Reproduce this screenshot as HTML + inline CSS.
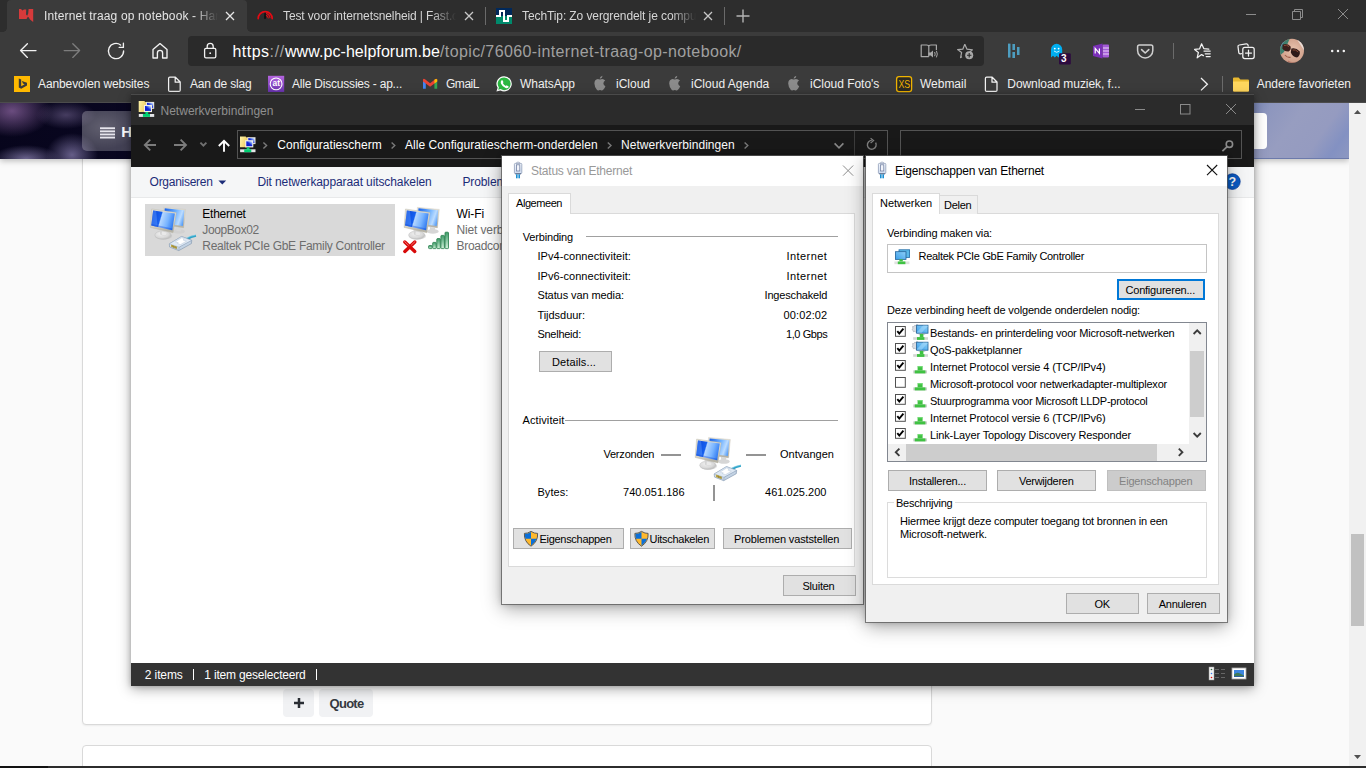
<!DOCTYPE html>
<html lang="nl"><head><meta charset="utf-8"><title>Internet traag op notebook</title>
<style>
html,body{margin:0;padding:0;}
body{width:1366px;height:768px;overflow:hidden;position:relative;background:#fafafa;font-family:"Liberation Sans",sans-serif;}
.layer{position:absolute;left:0;top:0;width:1366px;height:768px;overflow:hidden;}
.a{position:absolute;box-sizing:border-box;}
span.t{position:absolute;white-space:nowrap;font-family:"Liberation Sans",sans-serif;}
span.fade{overflow:hidden;-webkit-mask-image:linear-gradient(90deg,#000 0,#000 86%,transparent 100%);mask-image:linear-gradient(90deg,#000 0,#000 86%,transparent 100%);}
svg{position:absolute;overflow:visible;}
/* chrome */
#tabstrip{left:0;top:0;width:1366px;height:32px;background:#2d2d2d;}
#toolbar{left:0;top:32px;width:1366px;height:71px;background:#3b3b3b;border-bottom:1px solid #4c4c4c;}
#tab1{left:7px;top:0;width:240px;height:32px;background:#3b3b3b;border-radius:4px 4px 0 0;}
#tab1:before,#tab1:after{content:"";position:absolute;bottom:0;width:4px;height:4px;}
#tab1:before{left:-4px;background:radial-gradient(circle at 0 0,transparent 3.6px,#3b3b3b 4px);}
#tab1:after{right:-4px;background:radial-gradient(circle at 100% 0,transparent 3.6px,#3b3b3b 4px);}
#omni{left:188px;top:36px;width:796px;height:30px;background:#2a2a2a;border-radius:4px;}
.tsep{width:1px;height:18px;top:7px;background:#6a6a6a;}
/* page */
#hdr{left:0;top:103px;width:1349px;height:56px;background:
 radial-gradient(ellipse 40px 26px at 12px 8px,rgba(140,100,160,.75),transparent),
 radial-gradient(ellipse 30px 14px at 66px 12px,rgba(120,105,150,.55),transparent),
 radial-gradient(ellipse 34px 14px at 26px 56px,rgba(150,140,190,.7),transparent),
 radial-gradient(ellipse 26px 22px at 72px 52px,rgba(140,130,180,.7),transparent),
 linear-gradient(100deg,#07051c 0,#0a0722 14%,#5a5a8a 60%,#8f94bd 92%,#9a9dc0 100%);box-shadow:0 2px 6px rgba(0,0,0,.25);}
#hdrr{left:1240px;top:103px;width:109px;height:56px;background:linear-gradient(125deg,#7080b4 0,#8d96be 22%,#979dc0 45%,#959bc0 70%,#8391c2 86%,#8d98c1 100%);border-bottom:1px solid #6c7aab;}
#hbtn{left:82px;top:111px;width:110px;height:40px;border-radius:5px;background:radial-gradient(ellipse 34px 22px at 22px 16px,rgba(255,255,255,.16),transparent),rgba(255,255,255,.24);}
#hsearch{left:1000px;top:113px;width:267px;height:36px;border-radius:4px;background:#fff;}
#card1{left:82px;top:150px;width:850px;height:575px;background:#fff;border:1px solid #d9d9d9;border-radius:4px;box-shadow:0 1px 2px rgba(0,0,0,.06);}
#card2{left:82px;top:745px;width:850px;height:60px;background:#fff;border:1px solid #d9d9d9;border-radius:4px;}
.pbtn{background:#f1f2f4;border-radius:4px;}
#vsb{left:1349px;top:102px;width:17px;height:664px;background:#f1f1f1;}
#vthumb{left:1351px;top:534px;width:13px;height:92px;background:#c1c1c1;}
#taskbar{left:0;top:766px;width:1366px;height:2px;background:linear-gradient(90deg,#121212 0,#121212 48px,#2c2c2c 48px,#2c2c2c 100%);}
/* explorer */
#exp{left:131px;top:95px;width:1123px;height:591px;background:#fff;box-shadow:0 -1px 0 0 #4a4a4a,0 3px 12px rgba(0,0,0,.34),0 0 5px rgba(0,0,0,.22);}
#exptitle{left:131px;top:95px;width:1123px;height:30px;background:#2b2b2b;}
#expnav{left:131px;top:125px;width:1123px;height:42px;background:#191919;}
#expcmd{left:131px;top:167px;width:1123px;height:31px;background:#f5f6f7;border-bottom:1px solid #e8e9ea;}
#expstat{left:131px;top:663px;width:1123px;height:23px;background:#333;}
.nbox{border:1px solid #535353;background:#191919;}
#sel{left:145px;top:204px;width:250px;height:52px;background:#d9d9d9;}
/* dialogs */
.dlg{background:#f0f0f0;box-shadow:0 0 0 1px rgba(90,90,90,.75),0 4px 18px rgba(0,0,0,.38),0 0 6px rgba(0,0,0,.22);}
.dtitle{background:#fff;}
.panel{background:#fff;border:1px solid #dadada;}
.tab{background:#fff;border:1px solid #dadada;border-bottom:none;}
.tabi{background:#f0f0f0;border:1px solid #dadada;border-bottom:none;}
.btn{background:#e1e1e1;border:1px solid #adadad;}
.btnd{background:#cccccc;border:1px solid #bfbfbf;}
.hr{height:1px;background:#a0a0a0;}
.cb{width:13px;height:13px;border:1px solid #333;background:#fff;}

</style></head><body>
<!-- ================= PAGE ================= -->
<div class="layer" id="L-page">
<div class="a" id="card1"></div>
<div class="a" id="card2"></div>
<div class="a pbtn" style="left:283px;top:689px;width:31px;height:27.5px;"></div>
<div class="a pbtn" style="left:319px;top:689px;width:54px;height:27.5px;"></div>
<div class="a" id="hdr"></div>
<div class="a" id="hdrr"></div>
<div class="a" id="hbtn"></div>
<div class="a" id="hsearch"></div>
<svg style="left:100px;top:126.5px" width="15" height="12" viewBox="0 0 15 12"><g fill="#e6e4ec"><rect y="0.3" width="15" height="1.9"/><rect y="3.4" width="15" height="1.9"/><rect y="6.5" width="15" height="1.9"/><rect y="9.6" width="15" height="1.9"/></g></svg>
<div class="a" id="vsb"></div>
<div class="a" id="vthumb"></div>
<svg style="left:1354px;top:110px" width="7" height="4" viewBox="0 0 7 4"><path d="M0 4 L3.5 0 L7 4Z" fill="#505050"/></svg>
<svg style="left:1354px;top:755px" width="7" height="4" viewBox="0 0 7 4"><path d="M0 0 L3.5 4 L7 0Z" fill="#505050"/></svg>
<svg style="left:294px;top:698px" width="10" height="10" viewBox="0 0 10 10"><path d="M5 0 V10 M0 5 H10" stroke="#2a2e34" stroke-width="2.5" fill="none"/></svg>
<span class="t" id="t19" style="left:121.3px;top:121.9px;font-size:15px;line-height:19px;color:#fff;font-weight:700;">H</span>
<span class="t" id="t20" style="left:329.5px;top:695px;font-size:13px;line-height:17px;color:#353a40;font-weight:700;letter-spacing:-0.713px;">Quote</span>
<div class="a" id="taskbar"></div>
</div>
<!-- ================= CHROME ================= -->
<div class="layer" id="L-chrome" style="height:103px">
<div class="a" id="tabstrip"></div>
<div class="a" id="toolbar"></div>
<div class="a" id="tab1"></div>
<div class="a" id="omni"></div>
<div class="a tsep" style="left:485px"></div>
<div class="a tsep" style="left:724px"></div>
<!-- tab favicons -->
<svg style="left:0;top:0" width="1366" height="102" viewBox="0 0 1366 102">
<defs>
<linearGradient id="gat" x1="0" y1="0" x2="0" y2="1"><stop offset="0" stop-color="#b565e0"/><stop offset="1" stop-color="#6a34b0"/></linearGradient>
<clipPath id="avc"><circle cx="1292" cy="50.7" r="12"/></clipPath>
<radialGradient id="gface" cx="0.55" cy="0.45" r="0.6"><stop offset="0" stop-color="#e9c3ae"/><stop offset="1" stop-color="#c99782"/></radialGradient>
</defs>
<path d="M19 9 L21 9 L22.4 10.6 L24 9.6 L26.2 9.6 L26 14.6 L27.2 15.8 L28.2 13.5 L28.6 9 L33.2 9 L33.2 22 L30 19.4 L28.6 17.2 L27.8 16.8 L26.5 19 L19 19 Z" fill="#d63a3b"/>
<g fill="none" stroke="#e30a13" stroke-linecap="round">
<path d="M258.2 18.6 A7 7 0 0 1 272.2 18.6" stroke-width="1.7"/>
<path d="M266.5 13.4 A5.2 5.2 0 0 1 270 17.8" stroke-width="1.1"/>
<path d="M266.3 15.6 A3.2 3.2 0 0 1 268.2 18" stroke-width="1.1"/>
</g>
<path d="M264.5 12.8 L265.6 12.8 L265.9 18.8 L264.2 18.8Z" fill="#0a0a0a"/>
<rect x="496" y="8" width="16" height="8" fill="#00285a"/><rect x="496" y="16" width="16" height="8" fill="#008a6c"/>
<path d="M496 15 H499 V10 H505 V20 H507 V15 H512 V17 H509 V22 H503 V12 H501 V17 H496Z" fill="#fff"/>
<!-- tab close / plus -->
<g stroke="#e6e6e6" stroke-width="1.3" fill="none" stroke-linecap="butt">
<path d="M226 12 L234 20 M234 12 L226 20"/>
</g>
<g stroke="#c8c8c8" stroke-width="1.3" fill="none">
<path d="M465 12 L473 20 M473 12 L465 20"/>
<path d="M704 12 L712 20 M712 12 L704 20"/>
<path d="M736.5 16 H749.5 M743 9.5 V22.5" stroke="#b4b4b4" stroke-width="1.4"/>
</g>
<!-- window controls -->
<g stroke="#8c8c8c" stroke-width="1" fill="none">
<path d="M1246 14.5 H1256"/>
<path d="M1292.5 11.5 H1300.5 V19.5 H1292.5Z M1294.5 11.5 V9.5 H1302.5 V17.5 H1300.5"/>
<path d="M1338 9 L1348 19 M1348 9 L1338 19"/>
</g>
<!-- nav buttons -->
<g stroke="#f2f2f2" stroke-width="1.35" fill="none" stroke-linecap="round" stroke-linejoin="round">
<path d="M36 50.6 H20.6 M27.4 43.8 L20.6 50.6 L27.4 57.4"/>
<path d="M64.2 50.6 H79.6 M72.8 43.8 L79.6 50.6 L72.8 57.4" stroke="#7d7d7d"/>
<path d="M123.6 51 A7.6 7.6 0 1 1 120.6 45 M123.4 43.2 V47.4 H119.2"/>
<path d="M153 58 V49.6 L160 43.6 L167 49.6 V58 H162.6 V53 A2.6 2.6 0 0 0 157.4 53 V58 Z"/>
</g>
<!-- lock -->
<g stroke="#f2f2f2" stroke-width="1.3" fill="none" stroke-linejoin="round">
<rect x="204.6" y="48.4" width="11.2" height="9.4" rx="1.4"/>
<path d="M207.2 48.4 V46.4 A3 3 0 0 1 213.2 46.4 V48.4"/>
<circle cx="210.2" cy="53.2" r="0.9" fill="#f2f2f2" stroke="none"/>
</g>
<!-- read aloud + add favourite -->
<g stroke="#a9a9a9" stroke-width="1.2" fill="none" stroke-linejoin="round">
<path d="M928.8 45.4 V56.6 M928.8 56.6 H921.2 V45 H926.6 Q928.8 45 928.8 46.6 Q928.8 45 931 45 H936.4 V50"/>
<path d="M928.4 52.6 H930.6 L933 50.6 V57.6 L930.6 55.6 H928.4Z" fill="#a9a9a9" stroke="none"/>
<path d="M934.6 52 Q935.8 54.1 934.6 56.2 M936.4 50.8 Q938.2 54.1 936.4 57.4" stroke-width="1"/>
<path d="M964.8 44.2 L967 49.2 L972.4 49.8 L969.6 52.4 M962 56.8 L960.6 57.6 L961.6 52.6 L957.6 49.6 L962.8 49.2 L964.8 44.2"/>
</g>
<circle cx="969.2" cy="55.2" r="4" fill="#a9a9a9"/>
<path d="M969.2 53 V57.4 M967 55.2 H971.4" stroke="#2a2a2a" stroke-width="1.1"/>
<!-- extension icons -->
<g fill="#4d9dc0">
<rect x="1008" y="43.6" width="2.5" height="14"/><rect x="1012.4" y="44" width="2.6" height="6"/><rect x="1012.4" y="52" width="2.6" height="6"/><rect x="1017" y="47" width="2.5" height="8"/>
</g>
<path d="M1051 57.4 V49.4 A5.6 5.6 0 0 1 1062.2 49.4 V57.4 L1060.4 55.8 L1058.6 57.6 L1056.6 55.8 L1054.8 57.6 L1053 55.8 Z" fill="#00aef0"/>
<circle cx="1054.8" cy="48.6" r="0.9" fill="#fff"/><circle cx="1058.6" cy="48.6" r="0.9" fill="#fff"/>
<path d="M1054 51 Q1056.7 53.6 1059.4 51" stroke="#fff" stroke-width="0.8" fill="none"/>
<rect x="1059" y="53.2" width="11.8" height="11.2" rx="1.2" fill="#2d0b3f"/>
<path d="M1093 46 L1102.6 43.6 V58.4 L1093 56 Z" fill="#7b30b8"/>
<rect x="1102.6" y="44.6" width="6.4" height="12.8" rx="0.8" fill="#a45bd8"/>
<path d="M1103 48 H1109 M1103 51 H1109 M1103 54 H1109" stroke="#e9d6f7" stroke-width="1.1"/>
<path d="M1095.2 53.4 V48.4 L1099.4 53.4 V48.4" stroke="#fff" stroke-width="1.2" fill="none"/>
<path d="M1137.6 46.8 Q1137.6 45 1139.4 45 H1151 Q1152.8 45 1152.8 46.8 V50.4 A7.6 7.6 0 0 1 1137.6 50.4 Z" fill="none" stroke="#cfcfcf" stroke-width="1.5"/>
<path d="M1141.6 49.6 L1145.2 53 L1148.8 49.6" fill="none" stroke="#cfcfcf" stroke-width="1.6" stroke-linecap="round" stroke-linejoin="round"/>
<rect x="1173" y="43" width="1" height="16" fill="#6b6b6b"/>
<!-- favourites / collections / avatar / menu -->
<g stroke="#f2f2f2" stroke-width="1.25" fill="none" stroke-linejoin="round" stroke-linecap="round">
<path d="M1201.6 43.8 L1203.8 48.6 L1208.8 49.2 M1203.4 55.6 L1201.6 54.6 L1197.2 57.8 L1198.4 52.4 L1194.6 49.4 L1199.6 48.8 L1201.6 43.8"/>
<path d="M1204 51 H1210.2 M1205.2 53.8 H1210.2 M1206.2 56.6 H1210.2"/>
<path d="M1241.4 53.6 L1240.4 53.8 Q1239 54 1238.8 52.6 L1238 46.6 Q1237.8 45.2 1239.2 45 L1246.2 43.8 Q1247.6 43.6 1248 45 L1248.2 46"/>
<rect x="1242.8" y="47.4" width="11.4" height="11.2" rx="2"/>
<path d="M1248.5 50 V56 M1245.5 53 H1251.5"/>
</g>
<g clip-path="url(#avc)">
<rect x="1279" y="38" width="26" height="26" fill="url(#gface)"/>
<path d="M1279 38 H1290 L1284 52 L1279 56Z" fill="#3e7f6e"/>
<path d="M1279 38 H1286 L1281 47 L1279 48Z" fill="#5d8fc0"/>
<path d="M1296 38 H1305 V52 Q1300 44 1296 38Z" fill="#e8dcd6"/>
<path d="M1282.6 44.6 Q1287 42.6 1290.6 46.4 Q1291.4 49.8 1288.6 51.4 Q1284.2 51.6 1282.4 48.2Z" fill="#3a1f1c"/>
<path d="M1291.4 48.6 Q1295.6 47 1299.8 51.6 Q1300.4 55.8 1297 57.6 Q1292.6 57 1290.8 52.6Z" fill="#2f1a19"/>
<path d="M1284 45.6 Q1286.6 44.2 1289 46.6" stroke="#8a4a35" stroke-width="1" fill="none"/>
<path d="M1292.6 50 Q1295.6 49 1298.2 52" stroke="#8a4a35" stroke-width="1" fill="none"/>
<path d="M1285 55 Q1287.4 58.2 1290.6 57.2" stroke="#a0604c" stroke-width="1.2" fill="none"/>
<path d="M1288 60.5 Q1292 63.5 1297 61.5 L1296 64 H1287Z" fill="#b87a68"/>
</g>
<g fill="#f2f2f2"><circle cx="1332.2" cy="51" r="1.25"/><circle cx="1338" cy="51" r="1.25"/><circle cx="1343.8" cy="51" r="1.25"/></g>
<!-- bookmarks bar icons -->
<rect x="14" y="76" width="16" height="16" fill="#ffb900"/>
<path d="M18.8 78.6 L21.2 79.5 V86.2 L24.6 84.3 L22.9 83.5 L21.9 81 L27 82.8 V85.4 L21.2 88.8 L18.8 87.4 Z" fill="#3a3a3a"/>
<g stroke="#f2f2f2" stroke-width="1.25" fill="none" stroke-linejoin="round">
<path d="M168.6 78.4 Q168.6 77.2 169.8 77.2 H175.4 L180.2 82 V90.2 Q180.2 91.4 179 91.4 H169.8 Q168.6 91.4 168.6 90.2Z M175.2 77.4 V82.2 H180"/>
<path d="M985.4 78.4 Q985.4 77.2 986.6 77.2 H992.2 L997 82 V90.2 Q997 91.4 995.8 91.4 H986.6 Q985.4 91.4 985.4 90.2Z M992 77.4 V82.2 H996.8"/>
</g>
<rect x="268" y="75.8" width="16.2" height="16.2" fill="url(#gat)"/>
<circle cx="276.1" cy="83.9" r="5.9" fill="none" stroke="#fff" stroke-width="1.1"/>
<!-- gmail -->
<path d="M423 79.4 V88.8 H425.8 V82.6 Z" fill="#4285f4"/>
<path d="M437.2 79.4 V88.8 H434.4 V82.6 Z" fill="#34a853"/>
<path d="M423 79.4 Q423.6 78.4 425 79.2 L430.1 83.2 L435.2 79.2 Q436.6 78.4 437.2 79.4 V81.4 L430.1 86.8 L423 81.4Z" fill="#ea4335"/>
<path d="M434.4 79.8 L435.2 79.2 Q436.6 78.4 437.2 79.6 V81.4 L434.4 83.6Z" fill="#fbbc04"/>
<!-- whatsapp -->
<path d="M504.2 76.2 A7.6 7.6 0 1 1 500.4 90.4 L496.4 91.6 L497.6 87.8 A7.6 7.6 0 0 1 504.2 76.2Z" fill="#fff"/>
<path d="M504.2 77.4 A6.4 6.4 0 1 1 500.6 89.1 L498.2 89.8 L498.9 87.5 A6.4 6.4 0 0 1 504.2 77.4Z" fill="#2bb741"/>
<path d="M501.6 80.2 Q502.2 79.8 502.6 80.4 L503.4 82 Q503.5 82.4 502.8 83.1 Q503.8 85.1 505.8 86 Q506.5 85.2 506.9 85.4 L508.4 86.2 Q508.9 86.6 508.4 87.4 Q507.4 88.6 505.6 88 Q502.2 86.8 500.9 83.6 Q500.2 81.4 501.6 80.2Z" fill="#fff"/>
<!-- apple x3 -->
<g fill="#8b8b8b" id="apl">
<path d="M603.4 83.6 Q603.4 81.6 605.2 80.6 Q604 79 602.2 79 Q601.2 79 600 79.6 Q598.6 79 597.8 79 Q594.6 79.4 594.4 83.4 Q594.6 87.4 597 90 Q598 90.8 599 90.2 Q600 89.8 601 90.2 Q602.2 90.8 603.2 89.8 Q604.6 88.4 605.4 86.2 Q603.4 85.4 603.4 83.6Z M599.8 78.8 Q599.6 76.8 602.4 75.8 Q602.6 78.2 599.8 78.8Z"/>
</g>
<use href="#apl" x="74.8"/><use href="#apl" x="193.8"/>
<!-- XS -->
<rect x="896.6" y="76.6" width="15" height="15" rx="2.4" fill="#2c2a24" stroke="#f0b400" stroke-width="1.3"/>
<text x="898.4" y="88.2" font-family="Liberation Sans, sans-serif" font-size="11.6" fill="#f0b400" textLength="11.8" lengthAdjust="spacingAndGlyphs">XS</text>
<text x="276.2" y="86.4" font-family="Liberation Sans, sans-serif" font-size="8.4" font-weight="700" fill="#fff" text-anchor="middle">at</text>
<!-- overflow chevron, separator, folder -->
<path d="M1201 78 L1207.4 84.2 L1201 90.4" stroke="#f2f2f2" stroke-width="1.3" fill="none"/>
<rect x="1222" y="76" width="1" height="16" fill="#6b6b6b"/>
<path d="M1233 78.4 Q1233 77.4 1234 77.4 H1238.6 L1240.4 79.4 H1248 Q1249 79.4 1249 80.4 V90.4 Q1249 91.4 1248 91.4 H1234 Q1233 91.4 1233 90.4Z" fill="#e8b830"/>
<path d="M1233 81.6 H1249 V90.4 Q1249 91.4 1248 91.4 H1234 Q1233 91.4 1233 90.4Z" fill="#ffd75e"/>
</svg>

<span class="t fade" id="t0" style="left:44px;top:7.7px;font-size:12px;line-height:16px;color:#e4e4e4;letter-spacing:0.147px;width:174px;">Internet traag op notebook - Har</span>
<span class="t fade" id="t1" style="left:283px;top:7.7px;font-size:12px;line-height:16px;color:#d6d6d6;letter-spacing:-0.120px;width:173px;">Test voor internetsnelheid | Fast.c</span>
<span class="t fade" id="t2" style="left:522px;top:7.7px;font-size:12px;line-height:16px;color:#d6d6d6;letter-spacing:-0.098px;width:174px;">TechTip: Zo vergrendelt je compu</span>
<span class="t" id="t3" style="left:232.5px;top:42px;font-size:16px;line-height:20px;color:#ffffff;letter-spacing:0.463px;">https</span>
<span class="t" id="t4" style="left:269.5px;top:42px;font-size:16px;line-height:20px;color:#a0a0a0;letter-spacing:0.719px;">://</span>
<span class="t" id="t5" style="left:285px;top:42px;font-size:16px;line-height:20px;color:#ffffff;letter-spacing:0.061px;">www.pc-helpforum.be</span>
<span class="t" id="t6" style="left:440px;top:42px;font-size:16px;line-height:20px;color:#a0a0a0;letter-spacing:0.382px;">/topic/76060-internet-traag-op-notebook/</span>
<span class="t" id="t7" style="left:38px;top:76px;font-size:12px;line-height:16px;color:#f0f0f0;letter-spacing:-0.112px;">Aanbevolen websites</span>
<span class="t" id="t8" style="left:190px;top:76px;font-size:12px;line-height:16px;color:#f0f0f0;letter-spacing:-0.172px;">Aan de slag</span>
<span class="t" id="t9" style="left:292px;top:76px;font-size:12px;line-height:16px;color:#f0f0f0;letter-spacing:-0.204px;">Alle Discussies - ap...</span>
<span class="t" id="t10" style="left:446px;top:76px;font-size:12px;line-height:16px;color:#f0f0f0;letter-spacing:-0.469px;">GmaiL</span>
<span class="t" id="t11" style="left:520px;top:76px;font-size:12px;line-height:16px;color:#f0f0f0;letter-spacing:-0.045px;">WhatsApp</span>
<span class="t" id="t12" style="left:616px;top:76px;font-size:12px;line-height:16px;color:#f0f0f0;letter-spacing:-0.005px;">iCloud</span>
<span class="t" id="t13" style="left:691px;top:76px;font-size:12px;line-height:16px;color:#f0f0f0;letter-spacing:0.017px;">iCloud Agenda</span>
<span class="t" id="t14" style="left:810px;top:76px;font-size:12px;line-height:16px;color:#f0f0f0;letter-spacing:-0.027px;">iCloud Foto's</span>
<span class="t" id="t15" style="left:920px;top:76px;font-size:12px;line-height:16px;color:#f0f0f0;letter-spacing:-0.024px;">Webmail</span>
<span class="t" id="t16" style="left:1007.3px;top:76px;font-size:12px;line-height:16px;color:#f0f0f0;letter-spacing:-0.072px;">Download muziek, f...</span>
<span class="t" id="t17" style="left:1256.7px;top:76px;font-size:12px;line-height:16px;color:#f0f0f0;letter-spacing:-0.026px;">Andere favorieten</span>
<span class="t" id="t18" style="left:1061px;top:51.5px;font-size:10px;line-height:14px;color:#fff;font-weight:700;">3</span>
</div>
<!-- ================= EXPLORER ================= -->
<div class="layer" id="L-exp">
<div class="a" id="exp"></div>
<div class="a" id="exptitle"></div>
<div class="a" id="expnav"></div>
<div class="a" id="expcmd"></div>
<div class="a" id="expstat"></div>
<div class="a nbox" style="left:237px;top:130px;width:651px;height:29px;"></div>
<div class="a nbox" style="left:900px;top:130px;width:342px;height:29px;"></div>
<div class="a" style="left:854px;top:131px;width:1px;height:27px;background:#3c3c3c;"></div>
<div class="a" id="sel"></div>
<svg style="left:0;top:0" width="1366" height="768" viewBox="0 0 1366 768">
<defs>
<linearGradient id="gfold" x1="0" y1="0" x2="1" y2="0.3"><stop offset="0" stop-color="#fff4a8"/><stop offset="0.6" stop-color="#f3d878"/><stop offset="1" stop-color="#e3b850"/></linearGradient>
<linearGradient id="gscr16" x1="0" y1="1" x2="1" y2="0"><stop offset="0" stop-color="#0a10c8"/><stop offset="0.5" stop-color="#1428d8"/><stop offset="0.75" stop-color="#7a9cf4"/><stop offset="1" stop-color="#e8f0ff"/></linearGradient>
<g id="nf16">
<path d="M0 0.4 H5.6 L6.6 1.4 H9.6 V11.3 H0Z" fill="url(#gfold)"/>
<rect x="7.3" y="1.2" width="8.2" height="6.9" fill="#e9e8e0"/><rect x="8.3" y="2.1" width="6.2" height="5" fill="url(#gscr16)"/>
<rect x="5.2" y="4.2" width="8.1" height="7.2" fill="#f1f0e8"/><rect x="6.3" y="5.3" width="6" height="4.9" fill="url(#gscr16)"/>
<rect x="6.7" y="11.3" width="2.8" height="2.2" fill="#00cf72"/>
<rect x="0.1" y="13.3" width="15.4" height="2.9" fill="#e4e6e8"/><rect x="4.2" y="13.3" width="7.1" height="2.9" fill="#00cf72"/>
</g>
<!-- big monitor pair -->
<linearGradient id="gmf" x1="0" y1="0.35" x2="1" y2="0.6"><stop offset="0" stop-color="#0a46da"/><stop offset="0.36" stop-color="#1760ee"/><stop offset="0.41" stop-color="#b4d6ff"/><stop offset="0.7" stop-color="#78b4ff"/><stop offset="1" stop-color="#2874f0"/></linearGradient>
<linearGradient id="gmb" x1="0" y1="0.3" x2="1" y2="0.6"><stop offset="0" stop-color="#1c66ec"/><stop offset="0.5" stop-color="#6db0ff"/><stop offset="0.8" stop-color="#bcdcff"/><stop offset="1" stop-color="#5aa0f8"/></linearGradient>
<linearGradient id="gfr" x1="0" y1="0" x2="0.3" y2="1"><stop offset="0" stop-color="#e6e3d8"/><stop offset="0.7" stop-color="#d6d3c7"/><stop offset="1" stop-color="#b5b2a6"/></linearGradient>
<radialGradient id="gst" cx="0.4" cy="0.35" r="0.75"><stop offset="0" stop-color="#f0f0f0"/><stop offset="0.6" stop-color="#d9d9d9"/><stop offset="1" stop-color="#b4b4b4"/></radialGradient>
<g id="mon2">
<ellipse cx="34" cy="29.4" rx="5.8" ry="2.3" fill="#cfcfcf" opacity="0.85"/>
<path d="M31 25 L36.4 26 L36 29.4 L31.4 29Z" fill="#d6d6d6"/>
<path d="M18.6 5.3 L40.5 7.4 L38.7 25.9 L17.4 22.6 Z" fill="url(#gfr)" stroke="#c4c0b2" stroke-width="0.3"/>
<path d="M19.7 6.3 L39.4 8.2 L37.9 24 L18.6 21.4 Z" fill="url(#gmb)"/>
<ellipse cx="18.6" cy="34" rx="8.6" ry="3.6" fill="#b9b9b9" opacity="0.45"/>
<ellipse cx="17.9" cy="33.1" rx="8.1" ry="4.2" fill="url(#gst)" stroke="#bdbdbd" stroke-width="0.45"/>
<path d="M14.6 26.6 L22.8 28.6 L21.6 33 Q18 34.6 15.2 32.6Z" fill="#d4d4d4"/>
<path d="M17 29.4 L21.8 30.6 L21.4 32.8 Q18.6 33.8 16.6 32.6Z" fill="#e9e9e9"/>
<path d="M6.7 7 L31.3 10.6 L28.1 30.8 L5.3 25.4 Z" fill="url(#gfr)" stroke="#b7b3a4" stroke-width="0.4"/>
<path d="M8.1 8.4 L29.9 11.5 L27.2 28.2 L6.3 23.5 Z" fill="url(#gmf)"/>
<path d="M8.1 8.4 L11.2 8.9 L12.6 24.9 L6.3 23.5Z" fill="#5a9cff" opacity="0.45"/>
<path d="M6.3 23.5 L27.2 28.2 L27.5 26.6 L6.5 22Z" fill="#0a3fd0" opacity="0.35"/>
</g>
<linearGradient id="gplug" x1="0" y1="0" x2="1" y2="1"><stop offset="0" stop-color="#f2f7fc"/><stop offset="1" stop-color="#a9bdd2"/></linearGradient>
<g id="rj">
<path d="M40.6 36.4 Q45.6 33.6 50.8 32.7 L51.2 34.7 Q46.6 35.6 42.4 38.2Z" fill="#2ea3c8"/>
<path d="M41 36.2 Q45.8 33.8 50.8 33" stroke="#8fd6ec" stroke-width="0.6" fill="none"/>
<path d="M24.3 41.9 L36.6 34.5 L46.8 38.4 L46.4 41.6 L33.8 48.6 L24.6 45 Z" fill="url(#gplug)" stroke="#7e93ad" stroke-width="0.6" stroke-linejoin="round"/>
<path d="M24.3 41.9 L36.6 34.5 L46.8 38.4 L34.2 45.2Z" fill="#dfe9f4" stroke="#8fa4bd" stroke-width="0.45"/>
<path d="M34.2 45.2 L33.8 48.6 M34.2 45.2 L46.8 38.4" stroke="#8fa4bd" stroke-width="0.45" fill="none"/>
<path d="M30.4 39.8 L36.8 35.8 L39.4 36.8 L38 38 L41.4 39.2 L35.4 42.6 L32.4 41.4 L33.4 40.8Z" fill="#fff" stroke="#a9bace" stroke-width="0.35"/>
<path d="M36 44.8 L45.4 39.7 L45.2 41.4 L36 46.6Z" fill="#c3d3e4" opacity="0.9"/>
<path d="M26 42.5 L31.8 44.7 L31.8 47 L26 44.8Z" fill="#cdb74e"/>
<path d="M27.2 43 V45.3 M28.6 43.5 V45.8 M30 44 V46.3 M31.2 44.5 V46.8" stroke="#6f6224" stroke-width="0.55"/>
</g>
</defs>
<!-- title icon & address icon -->
<use href="#nf16" transform="translate(138.7,100.7)"/>
<use href="#nf16" transform="translate(240,136)"/>
<!-- window controls -->
<g stroke="#8a8a8a" stroke-width="1" fill="none">
<path d="M1135 109.5 H1145"/><rect x="1180.5" y="104.5" width="9.5" height="9.5"/><path d="M1226 104 L1236 114 M1236 104 L1226 114"/>
</g>
<!-- nav arrows -->
<g stroke="#7c7c7c" stroke-width="1.9" fill="none">
<path d="M156 145 H145 M150.2 139.6 L144.8 145 L150.2 150.4"/>
<path d="M174 145 H185 M180.6 139.6 L186 145 L180.6 150.4"/>
<path d="M200.4 142.6 L203.4 145.6 L206.4 142.6" stroke="#707070" stroke-width="1.9"/>
<path d="M224 151.8 V141 M218.8 146 L224 140.8 L229.2 146" stroke="#ffffff"/>
</g>
<g stroke="#7a7a7a" stroke-width="1.4" fill="none">
<path d="M263.4 142.4 L266.6 145.5 L263.4 148.6"/>
<path d="M391.6 142.4 L394.8 145.5 L391.6 148.6"/>
<path d="M607.8 142.4 L611 145.5 L607.8 148.6"/>
<path d="M744.6 142.4 L747.8 145.5 L744.6 148.6"/>
<path d="M834.6 143.4 L839 147.8 L843.4 143.4" stroke="#8a8a8a" stroke-width="1.6"/>
<path d="M875.6 142.6 A4.4 4.4 0 1 1 871.8 140.4" stroke="#7e7e7e" stroke-width="1.4"/>
<path d="M870.6 138.2 L873.6 140.6 L870.6 143" stroke="#7e7e7e" stroke-width="1.2"/>
</g>
<circle cx="1229.4" cy="144.2" r="3.2" fill="none" stroke="#8c8c8c" stroke-width="1.6"/>
<path d="M1227.2 146.6 L1222.4 151.2" stroke="#8c8c8c" stroke-width="1.8"/>
<!-- command bar -->
<path d="M218.4 180.4 H226.2 L222.3 184.6Z" fill="#1c2c78"/>
<circle cx="1232.4" cy="181.6" r="7.8" fill="#0a5bc4" stroke="#0a3f9a" stroke-width="0.8"/>
<text x="1232.4" y="186.2" font-family="Liberation Sans, sans-serif" font-size="12.5" font-weight="700" fill="#fff" text-anchor="middle">?</text>
<!-- big icons -->
<use href="#mon2" transform="translate(145,202)"/>
<use href="#rj" transform="translate(145,202)"/>
<use href="#mon2" transform="translate(398.8,202)"/>
<g stroke="#d80a0a" stroke-width="3.4" stroke-linecap="round"><path d="M404.8 242 L414.8 251.4 M414.8 242 L404.8 251.4"/></g>
<g stroke="#ff9a9a" stroke-width="1" stroke-linecap="round" opacity="0.7"><path d="M404.6 241.6 L408.4 245.2 M415 241.6 L411.4 245"/></g>
<linearGradient id="gbar" x1="0" y1="0" x2="0" y2="1"><stop offset="0" stop-color="#3f9d69"/><stop offset="1" stop-color="#d3f2dc"/></linearGradient>
<g fill="url(#gbar)" stroke="#1f7a46" stroke-width="0.8" stroke-linejoin="round">
<rect x="428.6" y="245.6" width="3.5" height="3" rx="0.7"/><rect x="432.7" y="242.4" width="3.5" height="6.2" rx="0.7"/><rect x="436.8" y="238.6" width="3.5" height="10" rx="0.7"/><rect x="440.9" y="235.4" width="3.5" height="13.2" rx="0.7"/><rect x="445" y="232.2" width="3.5" height="16.4" rx="0.7"/>
</g>
<!-- status bar -->
<rect x="193" y="669" width="1" height="11" fill="#fff"/><rect x="316" y="669" width="1" height="11" fill="#fff"/>
<rect x="1209" y="667" width="5" height="13" fill="#f2f2f2" stroke="#9a9a9a" stroke-width="0.5"/>
<circle cx="1211.5" cy="669.5" r="0.8" fill="#3a6a4a"/><circle cx="1211.5" cy="673.5" r="0.8" fill="#3a7af0"/><circle cx="1211.5" cy="677.5" r="0.8" fill="#e01010"/>
<path d="M1215 669.5 H1219 M1221 669.5 H1225 M1215 673.5 H1219 M1221 673.5 H1225 M1215 677.5 H1219 M1221 677.5 H1225" stroke="#666" stroke-width="1"/>
<rect x="1232" y="668" width="14" height="11" fill="#fff" stroke="#a8a8a8" stroke-width="0.8"/>
<rect x="1234" y="670" width="10" height="7" fill="#3d85e0"/><path d="M1234 674.5 Q1237 671.5 1240 673.6 L1244 675.4 V677 H1234Z" fill="#3f7a5a"/><path d="M1234 676 H1244 V677 H1234Z" fill="#2c5f9e"/>
</svg>

<span class="t" id="t21" style="left:160.5px;top:102.6px;font-size:12px;line-height:16px;color:#8f8f8f;letter-spacing:0.014px;">Netwerkverbindingen</span>
<span class="t" id="t22" style="left:277.3px;top:137px;font-size:12px;line-height:16px;color:#fff;letter-spacing:0.025px;">Configuratiescherm</span>
<span class="t" id="t23" style="left:405px;top:137px;font-size:12px;line-height:16px;color:#fff;letter-spacing:0.037px;">Alle Configuratiescherm-onderdelen</span>
<span class="t" id="t24" style="left:621px;top:137px;font-size:12px;line-height:16px;color:#fff;letter-spacing:0.056px;">Netwerkverbindingen</span>
<span class="t" id="t25" style="left:149.6px;top:174px;font-size:12px;line-height:16px;color:#1c2c78;letter-spacing:-0.277px;">Organiseren</span>
<span class="t" id="t26" style="left:257.4px;top:174px;font-size:12px;line-height:16px;color:#1c2c78;letter-spacing:-0.101px;">Dit netwerkapparaat uitschakelen</span>
<span class="t" id="t27" style="left:462.4px;top:174px;font-size:12px;line-height:16px;color:#1c2c78;letter-spacing:-0.1px;">Problemen met deze verbinding vaststellen</span>
<span class="t" id="t28" style="left:202.3px;top:206px;font-size:12px;line-height:16px;color:#000;letter-spacing:-0.247px;">Ethernet</span>
<span class="t" id="t29" style="left:202.3px;top:222px;font-size:12px;line-height:16px;color:#6d6d6d;letter-spacing:-0.394px;">JoopBox02</span>
<span class="t" id="t30" style="left:202.3px;top:238px;font-size:12px;line-height:16px;color:#6d6d6d;letter-spacing:-0.282px;">Realtek PCIe GbE Family Controller</span>
<span class="t" id="t31" style="left:456.5px;top:206px;font-size:12px;line-height:16px;color:#000;letter-spacing:-0.097px;">Wi-Fi</span>
<span class="t" id="t32" style="left:456.5px;top:222px;font-size:12px;line-height:16px;color:#6d6d6d;letter-spacing:-0.135px;">Niet verbonden</span>
<span class="t" id="t33" style="left:456.5px;top:238px;font-size:12px;line-height:16px;color:#6d6d6d;letter-spacing:-0.282px;">Broadcom 802.11n-netwerkadapter</span>
<span class="t" id="t34" style="left:144.8px;top:666.6px;font-size:12px;line-height:16px;color:#fff;letter-spacing:-0.113px;">2 items</span>
<span class="t" id="t35" style="left:204.3px;top:666.6px;font-size:12px;line-height:16px;color:#fff;letter-spacing:-0.181px;">1 item geselecteerd</span>
</div>
<!-- ================= STATUS DIALOG ================= -->
<div class="layer" id="L-dlg1">
<div class="a dlg" style="left:502px;top:156px;width:361px;height:448px;"></div>
<div class="a dtitle" style="left:502px;top:156px;width:361px;height:30px;"></div>
<div class="a panel" style="left:508px;top:213px;width:347px;height:354px;"></div>
<div class="a tab" style="left:508px;top:193px;width:63px;height:21px;"></div>
<div class="a hr" style="left:586px;top:235.7px;width:252px;"></div>
<div class="a hr" style="left:565px;top:419.5px;width:273px;"></div>
<div class="a btn" style="left:539px;top:351px;width:73px;height:21px;"></div>
<div class="a hr" style="left:661px;top:454px;width:20px;height:2px;background:#949494"></div>
<div class="a hr" style="left:746px;top:454px;width:20px;height:2px;background:#949494"></div>
<div class="a" style="left:712.8px;top:485px;width:2px;height:16px;background:#949494"></div>
<div class="a btn" style="left:513px;top:528px;width:111px;height:20.5px;"></div>
<div class="a btn" style="left:630px;top:528px;width:85px;height:20.5px;"></div>
<div class="a btn" style="left:723px;top:528px;width:129px;height:20.5px;"></div>
<div class="a btn" style="left:783px;top:575px;width:73px;height:21px;"></div>
<svg style="left:0;top:0" width="1366" height="768" viewBox="0 0 1366 768">
<defs>
<linearGradient id="gpl" x1="0" y1="0" x2="0" y2="1"><stop offset="0" stop-color="#f4f7fc"/><stop offset="1" stop-color="#cfdcf0"/></linearGradient>
<g id="plug16">
<path d="M2.3 1.9 Q2.3 0.4 3.6 0.4 H4.6 Q5.9 0.4 5.9 1.9" fill="#eef2f8" stroke="#8a98b4" stroke-width="0.7"/>
<rect x="0.4" y="1.6" width="7.4" height="10.2" rx="0.9" fill="url(#gpl)" stroke="#8a98b4" stroke-width="0.75"/>
<rect x="2.4" y="3" width="3.4" height="6.2" fill="#f2f4fa" stroke="#6f7ea0" stroke-width="0.75"/>
<rect x="1.2" y="11.6" width="5.8" height="0.9" fill="#4a5a7a"/>
<rect x="2" y="12.5" width="1.6" height="4" fill="#1b8fd2"/><rect x="4.4" y="12.5" width="1.6" height="4" fill="#1b8fd2"/>
</g>
<g id="shield">
<path d="M7 0.4 Q10.6 2.6 13.6 2.4 Q14.2 10.4 7 15.2 Q-0.2 10.4 0.4 2.4 Q3.4 2.6 7 0.4Z" fill="#ffb92e" stroke="#4e4e4e" stroke-width="0.9" stroke-linejoin="round"/>
<path d="M7 0.9 Q3.6 2.9 0.9 2.8 Q0.7 5.6 1.4 7.8 H7Z" fill="#0b6fd8"/>
<path d="M7 7.8 H12.6 Q11.4 11.8 7 14.7Z" fill="#0b6fd8"/>
</g>
</defs>
<use href="#plug16" transform="translate(514,161.8)"/>
<path d="M843 165.5 L853.2 175.7 M853.2 165.5 L843 175.7" stroke="#8e8e8e" stroke-width="1" fill="none"/>
<use href="#mon2" transform="translate(689.9,432.1)"/>
<use href="#rj" transform="translate(689.9,432.1)"/>
<use href="#shield" transform="translate(524,531)"/>
<use href="#shield" transform="translate(634.5,531)"/>
</svg>

<span class="t" id="t36" style="left:531px;top:162.8px;font-size:12px;line-height:16px;color:#999;letter-spacing:-0.232px;">Status van Ethernet</span>
<span class="t" id="t37" style="left:516px;top:196px;font-size:11px;line-height:15px;color:#000;letter-spacing:-0.443px;">Algemeen</span>
<span class="t" id="t38" style="left:522.8px;top:229.5px;font-size:11px;line-height:15px;color:#000;letter-spacing:-0.180px;">Verbinding</span>
<span class="t" id="t39" style="left:537.4px;top:248.9px;font-size:11px;line-height:15px;color:#000;letter-spacing:0.064px;">IPv4-connectiviteit:</span>
<span class="t" id="t40" style="left:786.5px;top:248.9px;font-size:11px;line-height:15px;color:#000;letter-spacing:0.436px;">Internet</span>
<span class="t" id="t41" style="left:537.4px;top:268.7px;font-size:11px;line-height:15px;color:#000;letter-spacing:0.064px;">IPv6-connectiviteit:</span>
<span class="t" id="t42" style="left:786.5px;top:269.3px;font-size:11px;line-height:15px;color:#000;letter-spacing:0.436px;">Internet</span>
<span class="t" id="t43" style="left:537.4px;top:287.8px;font-size:11px;line-height:15px;color:#000;letter-spacing:-0.086px;">Status van media:</span>
<span class="t" id="t44" style="left:764.5px;top:287.8px;font-size:11px;line-height:15px;color:#000;letter-spacing:-0.169px;">Ingeschakeld</span>
<span class="t" id="t45" style="left:537.4px;top:307.7px;font-size:11px;line-height:15px;color:#000;letter-spacing:-0.029px;">Tijdsduur:</span>
<span class="t" id="t46" style="left:783.5px;top:307.7px;font-size:11px;line-height:15px;color:#000;letter-spacing:0.121px;">00:02:02</span>
<span class="t" id="t47" style="left:537.4px;top:326.8px;font-size:11px;line-height:15px;color:#000;letter-spacing:-0.253px;">Snelheid:</span>
<span class="t" id="t48" style="left:786px;top:326.8px;font-size:11px;line-height:15px;color:#000;letter-spacing:-0.418px;">1,0 Gbps</span>
<span class="t" id="t49" style="left:552px;top:354.5px;font-size:11px;line-height:15px;color:#000;letter-spacing:0.120px;">Details...</span>
<span class="t" id="t50" style="left:522.5px;top:412.5px;font-size:11px;line-height:15px;color:#000;letter-spacing:0.103px;">Activiteit</span>
<span class="t" id="t51" style="left:603.4px;top:446.9px;font-size:11px;line-height:15px;color:#000;letter-spacing:-0.190px;">Verzonden</span>
<span class="t" id="t52" style="left:780px;top:446.9px;font-size:11px;line-height:15px;color:#000;letter-spacing:0.019px;">Ontvangen</span>
<span class="t" id="t53" style="left:537.4px;top:484.8px;font-size:11px;line-height:15px;color:#000;letter-spacing:0.087px;">Bytes:</span>
<span class="t" id="t54" style="left:623px;top:484.8px;font-size:11px;line-height:15px;color:#000;letter-spacing:0.039px;">740.051.186</span>
<span class="t" id="t55" style="left:765px;top:484.8px;font-size:11px;line-height:15px;color:#000;letter-spacing:0.021px;">461.025.200</span>
<span class="t" id="t56" style="left:539.5px;top:531.5px;font-size:11px;line-height:15px;color:#000;letter-spacing:-0.296px;">Eigenschappen</span>
<span class="t" id="t57" style="left:649.5px;top:531.5px;font-size:11px;line-height:15px;color:#000;letter-spacing:-0.290px;">Uitschakelen</span>
<span class="t" id="t58" style="left:734px;top:531.5px;font-size:11px;line-height:15px;color:#000;letter-spacing:-0.140px;">Problemen vaststellen</span>
<span class="t" id="t59" style="left:802.5px;top:578.9px;font-size:11px;line-height:15px;color:#000;letter-spacing:-0.234px;">Sluiten</span>
</div>
<!-- ================= PROPERTIES DIALOG ================= -->
<div class="layer" id="L-dlg2">
<div class="a dlg" style="left:866px;top:156px;width:361px;height:466px;"></div>
<div class="a dtitle" style="left:866px;top:156px;width:361px;height:30px;"></div>
<div class="a panel" style="left:872px;top:213px;width:347px;height:372px;"></div>
<div class="a tabi" style="left:939px;top:195px;width:39px;height:19px;"></div>
<div class="a tab" style="left:872px;top:193px;width:68px;height:21px;"></div>
<div class="a" style="left:887px;top:244px;width:320px;height:28.5px;background:#fff;border:1px solid #c4c4c4;"></div>
<div class="a btn" style="left:1117px;top:279px;width:88px;height:21px;border:2px solid #0078d7;"></div>
<div class="a" style="left:887px;top:322px;width:320px;height:140px;background:#fff;border:1px solid #828790;"></div>
<div class="a" style="left:1188.5px;top:323px;width:17.5px;height:120.5px;background:#f0f0f0;"></div>
<div class="a" style="left:1189.5px;top:351px;width:14px;height:65.5px;background:#cdcdcd;"></div>
<div class="a" style="left:888px;top:443.5px;width:300.5px;height:17.5px;background:#f0f0f0;"></div>
<div class="a" style="left:906px;top:443.5px;width:251px;height:17.5px;background:#cdcdcd;"></div>
<div class="a" style="left:1188.5px;top:443.5px;width:17.5px;height:17.5px;background:#f0f0f0;"></div>
<div class="a btn" style="left:888px;top:470px;width:99px;height:21px;"></div>
<div class="a btn" style="left:997px;top:470px;width:99px;height:21px;"></div>
<div class="a btnd" style="left:1107px;top:470px;width:99px;height:21px;"></div>
<div class="a" style="left:887px;top:502px;width:320px;height:76px;border:1px solid #dcdcdc;background:#fff;"></div>
<div class="a btn" style="left:1066px;top:593px;width:73px;height:21px;"></div>
<div class="a btn" style="left:1147px;top:593px;width:73px;height:21px;"></div>
<svg style="left:0;top:0" width="1366" height="768" viewBox="0 0 1366 768">
<defs>
<linearGradient id="gsv" x1="0" y1="1" x2="1" y2="0"><stop offset="0" stop-color="#3a9ee8"/><stop offset="1" stop-color="#8fd0f8"/></linearGradient>
<g id="ck"><rect x="0.5" y="0.5" width="9.8" height="9.8" fill="#fff" stroke="#505050" stroke-width="1"/></g>
<g id="ckv"><use href="#ck"/><path d="M2.3 5.2 L4.3 7.5 L8.4 2.7" stroke="#000" stroke-width="1.9" fill="none"/></g>
<g id="proto">
<rect x="0.3" y="12.4" width="13.6" height="3" fill="#c6cbc6"/><rect x="1.8" y="12.4" width="10.6" height="3" fill="#3fc242"/>
<rect x="4.6" y="8.2" width="5" height="4.2" fill="#3fc242"/><rect x="4.6" y="8.2" width="5" height="1" fill="#7adf7c"/>
</g>
<g id="svc">
<path d="M0.4 2.2 L1.6 2.4 L2.4 1 L3.8 1.4 L4 0.4 H5.6 V8 H3.6 L2.6 7 L1.2 7.4 L0.8 6 L-0.2 5.2 L0.6 4.2Z" fill="#d9dde2" stroke="#8e97a3" stroke-width="0.5"/>
<rect x="4.4" y="0.9" width="11.4" height="8" fill="url(#gsv)" stroke="#1f5f96" stroke-width="0.8"/>
<path d="M4.8 7.6 L11 1.3 H15.4 V2 L9.4 8.5 H4.8Z" fill="#a9dcfb" opacity="0.55"/>
<rect x="6.4" y="9.3" width="6.6" height="0.8" fill="#8a99aa"/>
<rect x="7.6" y="9.6" width="3.6" height="3.6" fill="#3fc242"/>
<rect x="1" y="12.8" width="14.8" height="2.8" fill="#dfe2df"/><path d="M1 13.7 H15.8 M1 14.7 H15.8" stroke="#c2c6c2" stroke-width="0.4"/><rect x="4.8" y="12.8" width="7.4" height="2.8" fill="#3fc242"/>
</g>
</defs>
<use href="#plug16" transform="translate(878,161.8)"/>
<path d="M1207 165 L1217.2 175.2 M1217.2 165 L1207 175.2" stroke="#111" stroke-width="1.1" fill="none"/>
<!-- adapter icon -->
<g transform="translate(894,249.2) scale(1,0.96)">
<rect x="5" y="0.6" width="10.6" height="8" fill="#5ab8e8" stroke="#1f6aa6" stroke-width="0.8"/>
<rect x="1.4" y="2.6" width="10.6" height="8" fill="url(#gsv)" stroke="#1f5f96" stroke-width="0.8"/>
<rect x="5.4" y="10.6" width="3.4" height="2.4" fill="#3fc242"/>
<rect x="0.4" y="12.8" width="15" height="2.8" fill="#dfe2df"/><rect x="3.8" y="12.8" width="7.6" height="2.8" fill="#3fc242"/>
</g>
<!-- list -->
<use href="#ckv" transform="translate(895,326)"/><use href="#ckv" transform="translate(895,343)"/><use href="#ckv" transform="translate(895,360)"/>
<use href="#ck" transform="translate(895,377)"/><use href="#ckv" transform="translate(895,394)"/><use href="#ckv" transform="translate(895,411)"/><use href="#ckv" transform="translate(895,428)"/>
<use href="#svc" transform="translate(912.2,324.3)"/><use href="#svc" transform="translate(912.2,341.3)"/>
<use href="#proto" transform="translate(913,358)"/><use href="#proto" transform="translate(913,375)"/><use href="#proto" transform="translate(913,392)"/><use href="#proto" transform="translate(913,409)"/><use href="#proto" transform="translate(913,426)"/>
<!-- scrollbar arrows -->
<g stroke="#3c3c3c" stroke-width="1.9" fill="none">
<path d="M1193.6 334 L1197.2 330.4 L1200.8 334"/>
<path d="M1193.6 433 L1197.2 436.6 L1200.8 433"/>
<path d="M899.4 448.6 L895.8 452.2 L899.4 455.8"/>
<path d="M1178.8 448.6 L1182.4 452.2 L1178.8 455.8"/>
</g>
</svg>

<span class="t" id="t60" style="left:895px;top:163.2px;font-size:12px;line-height:16px;color:#000;letter-spacing:-0.197px;">Eigenschappen van Ethernet</span>
<span class="t" id="t61" style="left:880px;top:196px;font-size:11px;line-height:15px;color:#000;letter-spacing:-0.064px;">Netwerken</span>
<span class="t" id="t62" style="left:944px;top:197.5px;font-size:11px;line-height:15px;color:#000;letter-spacing:-0.250px;">Delen</span>
<span class="t" id="t63" style="left:887px;top:225.8px;font-size:11px;line-height:15px;color:#000;letter-spacing:-0.154px;">Verbinding maken via:</span>
<span class="t" id="t64" style="left:918.6px;top:248.8px;font-size:11px;line-height:15px;color:#000;letter-spacing:-0.314px;">Realtek PCIe GbE Family Controller</span>
<span class="t" id="t65" style="left:1125.5px;top:282.8px;font-size:11px;line-height:15px;color:#000;letter-spacing:-0.218px;">Configureren...</span>
<span class="t" id="t66" style="left:887px;top:303px;font-size:11px;line-height:15px;color:#000;letter-spacing:-0.160px;">Deze verbinding heeft de volgende onderdelen nodig:</span>
<span class="t" id="t67" style="left:930px;top:325.5px;font-size:11px;line-height:15px;color:#000;letter-spacing:-0.205px;">Bestands- en printerdeling voor Microsoft-netwerken</span>
<span class="t" id="t68" style="left:930px;top:342.5px;font-size:11px;line-height:15px;color:#000;letter-spacing:-0.164px;">QoS-pakketplanner</span>
<span class="t" id="t69" style="left:930px;top:359.5px;font-size:11px;line-height:15px;color:#000;letter-spacing:-0.114px;">Internet Protocol versie 4 (TCP/IPv4)</span>
<span class="t" id="t70" style="left:930px;top:376.5px;font-size:11px;line-height:15px;color:#000;letter-spacing:-0.212px;">Microsoft-protocol voor netwerkadapter-multiplexor</span>
<span class="t" id="t71" style="left:930px;top:393.5px;font-size:11px;line-height:15px;color:#000;letter-spacing:-0.245px;">Stuurprogramma voor Microsoft LLDP-protocol</span>
<span class="t" id="t72" style="left:930px;top:410.5px;font-size:11px;line-height:15px;color:#000;letter-spacing:-0.114px;">Internet Protocol versie 6 (TCP/IPv6)</span>
<span class="t" id="t73" style="left:930px;top:427.5px;font-size:11px;line-height:15px;color:#000;letter-spacing:-0.140px;">Link-Layer Topology Discovery Responder</span>
<span class="t" id="t74" style="left:909px;top:473.5px;font-size:11px;line-height:15px;color:#000;letter-spacing:-0.209px;">Installeren...</span>
<span class="t" id="t75" style="left:1019px;top:473.5px;font-size:11px;line-height:15px;color:#000;letter-spacing:-0.271px;">Verwijderen</span>
<span class="t" id="t76" style="left:1119px;top:473.5px;font-size:11px;line-height:15px;color:#838383;letter-spacing:-0.180px;">Eigenschappen</span>
<span class="t" id="t77" style="left:896px;top:496px;font-size:11px;line-height:15px;color:#000;letter-spacing:-0.234px;background:#fff;padding:0 2px;margin-left:-2px;">Beschrijving</span>
<span class="t" id="t78" style="left:900px;top:513.8px;font-size:11px;line-height:15px;color:#000;letter-spacing:-0.195px;">Hiermee krijgt deze computer toegang tot bronnen in een</span>
<span class="t" id="t79" style="left:900px;top:526.5px;font-size:11px;line-height:15px;color:#000;letter-spacing:-0.159px;">Microsoft-netwerk.</span>
<span class="t" id="t80" style="left:1094.5px;top:596.5px;font-size:11px;line-height:15px;color:#000;letter-spacing:-0.203px;">OK</span>
<span class="t" id="t81" style="left:1158.8px;top:596.5px;font-size:11px;line-height:15px;color:#000;letter-spacing:-0.306px;">Annuleren</span>
</div>
</body></html>
